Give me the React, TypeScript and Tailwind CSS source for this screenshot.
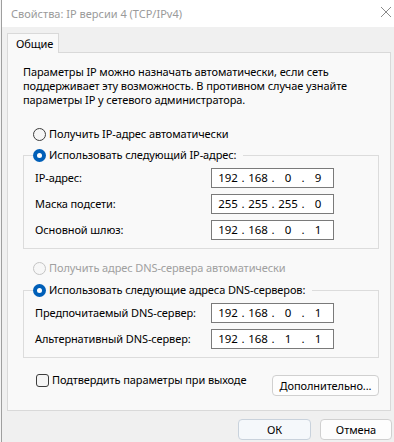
import React from "react";

function Radio({ checked, disabled }: { checked?: boolean; disabled?: boolean }) {
  if (checked) {
    return (
      <span className="w-[13px] h-[13px] rounded-full bg-[#005fb8] flex items-center justify-center shrink-0">
        <span className="w-[5px] h-[5px] rounded-full bg-white" />
      </span>
    );
  }
  return (
    <span
      className={
        disabled
          ? "w-[13px] h-[13px] rounded-full border border-[#c4c4c4] bg-[#f7f7f7] shrink-0"
          : "w-[13px] h-[13px] rounded-full border border-[#3c3c3c] bg-[#f5f5f5] shrink-0"
      }
    />
  );
}

function IpInput({ parts }: { parts: string[] }) {
  return (
    <div className="w-[123px] h-[20px] shrink-0 border border-[#7a7a7a] bg-white flex items-center pl-[3px] text-[11.5px]">
      {parts.map((p, i) => (
        <React.Fragment key={i}>
          <span className="w-[26px] text-center">{p}</span>
          {i < 3 && <span className="w-[4px] text-center">.</span>}
        </React.Fragment>
      ))}
    </div>
  );
}

function Row({ label, parts }: { label: string; parts: string[] }) {
  return (
    <div className="flex items-center h-[20px]">
      <span className="w-[176px] shrink-0 whitespace-nowrap">{label}</span>
      <IpInput parts={parts} />
    </div>
  );
}

function Group({
  legend,
  rows,
}: {
  legend: string;
  rows: { label: string; parts: string[] }[];
}) {
  return (
    <div className="flex flex-col">
      <div className="relative z-10 flex h-[16px] items-center pl-[10px]">
        <div className="flex items-center gap-[3px] bg-[#f9f9f9] pr-[7px]">
          <Radio checked />
          <span className="whitespace-nowrap">{legend}</span>
        </div>
      </div>
      <div className="-mt-[8px] border border-[#dcdcdc] pl-[11px] pt-[12px] pb-[8px] flex flex-col gap-[6px]">
        {rows.map((r, i) => (
          <Row key={i} label={r.label} parts={r.parts} />
        ))}
      </div>
    </div>
  );
}

export default function App() {
  return (
    <div className="w-[394px] h-[442px] bg-[#f0f0f0] flex text-[11px] leading-[14px] tracking-[-0.1px] text-black font-['Noto_Sans',sans-serif] overflow-hidden">
      <div className="w-px bg-[#f4f4f4]" />
      <div className="w-px bg-[#9f9f9f]" />
      <div className="flex-1 flex flex-col">
        <div className="h-[27px] bg-white flex items-center justify-between pl-[9px] pr-[2px]">
          <span className="text-[#9a9a9a] text-[11px] tracking-normal whitespace-nowrap">Свойства: IP версии 4 (TCP/IPv4)</span>
          <svg width="12" height="12" viewBox="0 0 12 12" className="mb-[3px]">
            <path d="M1 1 L11 11 M11 1 L1 11" stroke="#8a8a8a" strokeWidth="1" fill="none" />
          </svg>
        </div>
        <div className="pt-[6px] pl-[5px]">
          <div className="relative z-10 w-[52px] h-[20px] -mb-px border border-b-0 border-[#d9d9d9] bg-[#f9f9f9] flex items-center pl-[8px]">
            Общие
          </div>
        </div>
        <div className="ml-[5px] mr-[3px] h-[359px] border border-[#d9d9d9] bg-[#f9f9f9] pl-[15px] pr-[11px] pt-[12px] flex flex-col">
          <p className="whitespace-nowrap">
            Параметры IP можно назначать автоматически, если сеть
            <br />
            поддерживает эту возможность. В противном случае узнайте
            <br />
            параметры IP у сетевого администратора.
          </p>
          <div className="mt-[19px] flex items-center h-[16px] pl-[10px] gap-[3px]">
            <Radio />
            <span className="whitespace-nowrap">Получить IP-адрес автоматически</span>
          </div>
          <div className="mt-[5px]">
            <Group
              legend="Использовать следующий IP-адрес:"
              rows={[
                { label: "IP-адрес:", parts: ["192", "168", "0", "9"] },
                { label: "Маска подсети:", parts: ["255", "255", "255", "0"] },
                { label: "Основной шлюз:", parts: ["192", "168", "0", "1"] },
              ]}
            />
          </div>
          <div className="mt-[11px] flex items-center h-[16px] pl-[10px] gap-[3px]">
            <Radio disabled />
            <span className="text-[#a0a0a0] whitespace-nowrap">Получить адрес DNS-сервера автоматически</span>
          </div>
          <div className="mt-[6px]">
            <Group
              legend="Использовать следующие адреса DNS-серверов:"
              rows={[
                { label: "Предпочитаемый DNS-сервер:", parts: ["192", "168", "0", "1"] },
                { label: "Альтернативный DNS-сервер:", parts: ["192", "168", "1", "1"] },
              ]}
            />
          </div>
          <div className="mt-[14px] flex items-start justify-between">
            <div className="flex items-center h-[16px] pl-[13px] gap-[3px]">
              <span className="w-[13px] h-[13px] rounded-[3px] border border-[#3c3c3c] bg-[#f5f5f5]" />
              <span className="whitespace-nowrap">Подтвердить параметры при выходе</span>
            </div>
            <div className="mt-[3px] w-[107px] h-[21px] rounded-[4px] border border-[#d0d0d0] bg-[#fdfdfd] flex items-center justify-center whitespace-nowrap">
              Дополнительно...
            </div>
          </div>
        </div>
        <div className="mt-[8px] flex justify-end gap-[9px] pr-[2px]">
          <div className="w-[73px] h-[21px] rounded-[4px] border border-[#c9d2dc] bg-[#f5f8fb] flex items-center justify-center">
            ОК
          </div>
          <div className="w-[72px] h-[21px] rounded-[4px] border border-[#d0d0d0] bg-[#fdfdfd] flex items-center justify-center">
            Отмена
          </div>
        </div>
      </div>
    </div>
  );
}
